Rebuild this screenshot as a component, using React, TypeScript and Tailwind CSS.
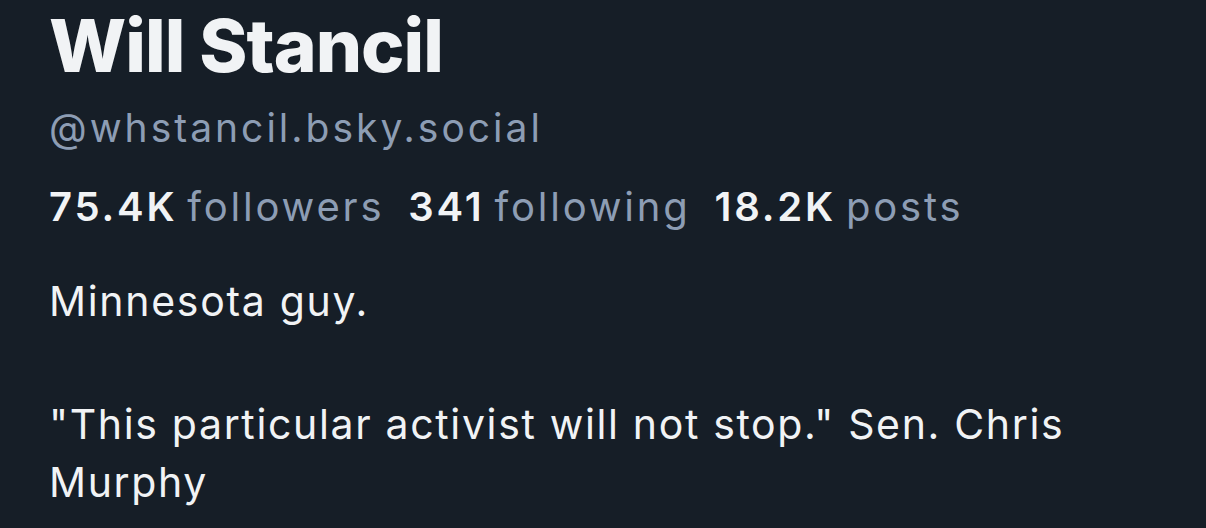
import React from "react";

const stats = [
  { value: "75.4K", label: "followers" },
  { value: "341", label: "following" },
  { value: "18.2K", label: "posts" },
];

export default function App() {
  return (
    <div className="min-h-[528px] w-full bg-[#161e27] px-[49px] pt-[2px] font-['Inter',sans-serif] text-[#f1f3f5] overflow-hidden">
      <h1 className="text-[73px] leading-[88px] font-extrabold tracking-[-1px]">Will Stancil</h1>
      <div className="mt-[14px] text-[39px] leading-[47px] tracking-[3px] text-[#8d9db4]">@whstancil.bsky.social</div>
      <div className="mt-[32px] flex items-baseline gap-[24px] text-[40px] leading-[48px] tracking-[2.8px]">
        {stats.map((s) => (
          <div key={s.label} className="flex items-baseline gap-[10px]">
            <span className="font-semibold text-[#f1f3f5]">{s.value}</span>
            <span className="text-[#8d9db4]">{s.label}</span>
          </div>
        ))}
      </div>
      <p className="mt-[41px] text-[41px] leading-[58px] tracking-[1.7px]">Minnesota guy.</p>
      <p className="mt-[65px] text-[41px] leading-[58px] tracking-[1.65px]">
        "This particular activist will not stop." Sen. Chris Murphy
      </p>
    </div>
  );
}
